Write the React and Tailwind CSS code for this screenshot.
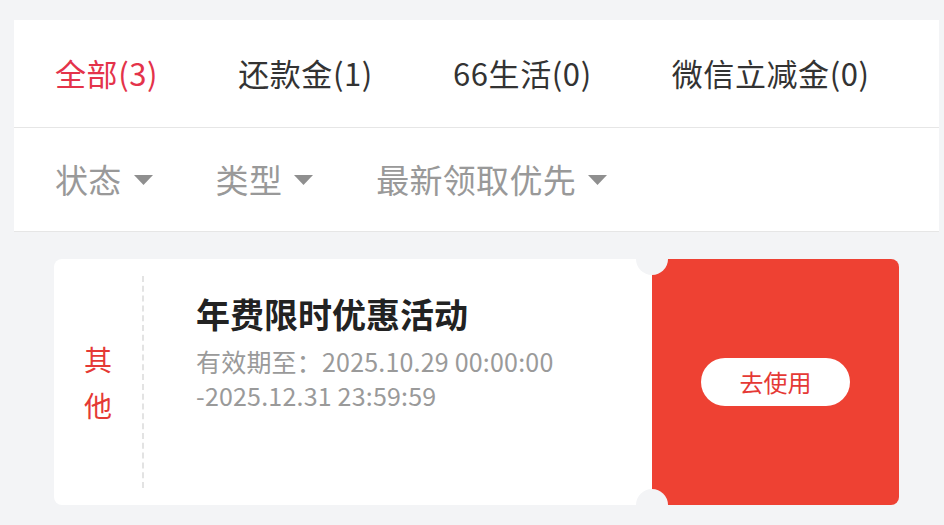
import React from "react";

const tabs = [
  { label: "全部(3)", active: true },
  { label: "还款金(1)" },
  { label: "66生活(0)" },
  { label: "微信立减金(0)" },
];

const filters = ["状态", "类型", "最新领取优先"];

const Caret = () => (
  <svg width="19" height="10" viewBox="0 0 19 10" className="ml-[12px]">
    <path d="M0 0 L19 0 L9.5 10 Z" fill="#8f8f8f" />
  </svg>
);

const App = () => {
  return (
    <div
      className="w-[944px] h-[525px] bg-[#f3f4f6] pt-5 pl-[14px] pr-[5px] overflow-hidden"
      style={{ fontFamily: '"Noto Sans CJK SC", "Noto Sans", sans-serif' }}
    >
      <div className="bg-white">
        <div className="h-[108px] flex items-center pl-[41px] gap-[80px] border-b border-[#e6e6e6] text-[31px] tracking-[0.6px]">
          {tabs.map((t) => (
            <span
              key={t.label}
              className={t.active ? "text-[#e4334a]" : "text-[#333333]"}
            >
              {t.label}
            </span>
          ))}
        </div>
        <div className="h-[104px] flex items-center pl-[41px] gap-[63px] border-b border-[#e6e6e6] text-[33px] tracking-[0.3px] text-[#999999]">
          {filters.map((f) => (
            <div key={f} className="flex items-center">
              <span>{f}</span>
              <Caret />
            </div>
          ))}
        </div>
      </div>

      <div className="mt-[27px] ml-[40px] w-[845px] h-[246px] flex">
        <div className="flex-1 bg-white rounded-l-lg flex py-[17px]">
          <div className="w-[88px] flex flex-col items-center justify-center text-[28px] leading-[46px] text-[#e53935]">
            <span>其</span>
            <span>他</span>
          </div>
          <div className="border-l-2 border-dashed border-[#e3e3e3]" />
          <div className="pl-[52px] pt-[15px] flex flex-col">
            <div className="text-[34px] font-bold text-[#222222] leading-[46px]">
              年费限时优惠活动
            </div>
            <div className="mt-[7px] text-[25px] tracking-[0.2px] leading-[34px] text-[#9a9a9a]">
              <div>有效期至：2025.10.29 00:00:00</div>
              <div>-2025.12.31 23:59:59</div>
            </div>
          </div>
        </div>
        <div className="relative w-[247px] bg-[#ee4133] rounded-r-lg flex items-center justify-center">
          <div className="absolute -left-4 -top-4 w-8 h-8 rounded-full bg-[#f3f4f6]" />
          <div className="absolute -left-4 -bottom-4 w-8 h-8 rounded-full bg-[#f3f4f6]" />
          <div className="w-[149px] h-[48px] rounded-full bg-white flex items-center justify-center text-[24px] text-[#e53935]">
            去使用
          </div>
        </div>
      </div>
    </div>
  );
};

export default App;
